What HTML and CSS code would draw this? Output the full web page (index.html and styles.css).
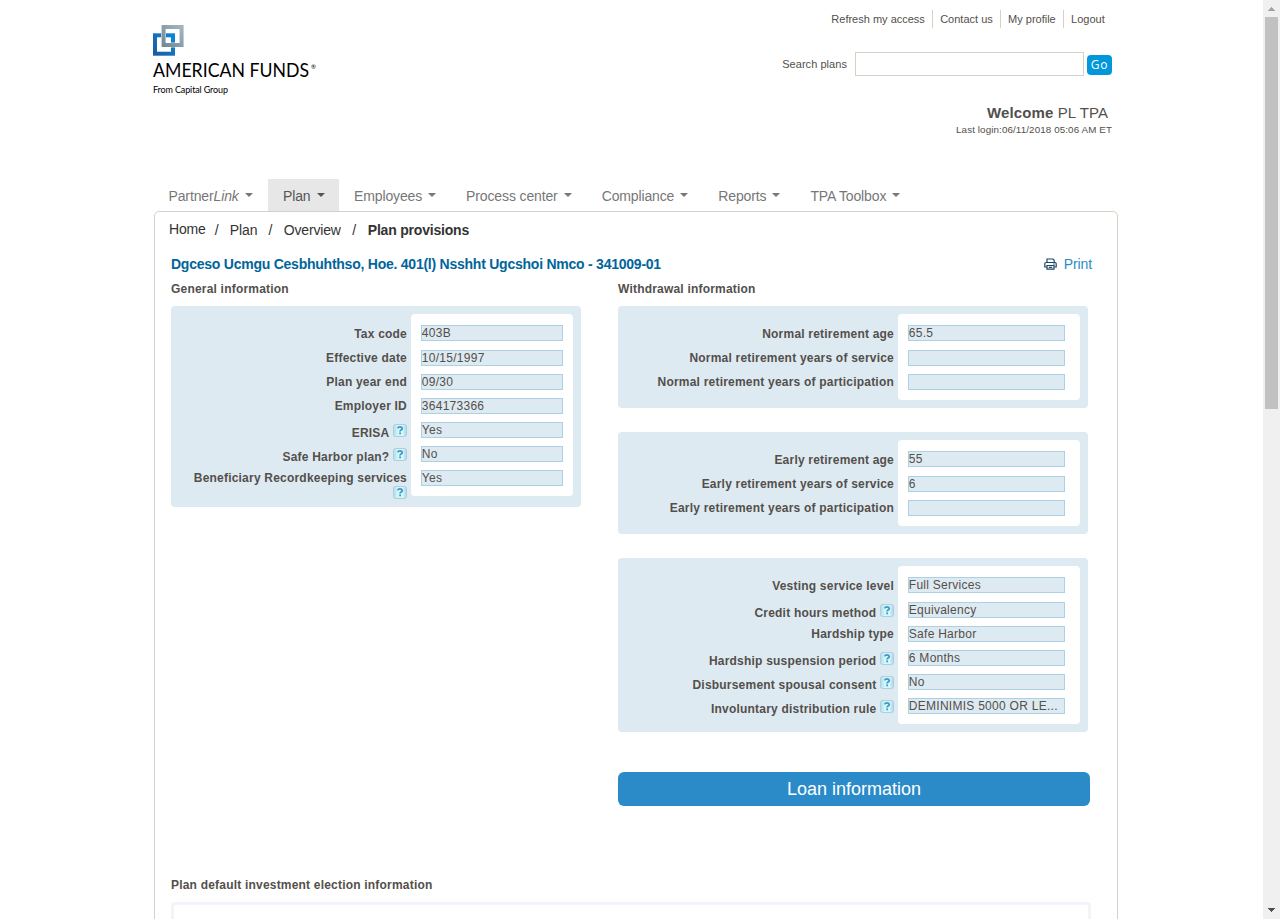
FILE: index.html
```html
<!DOCTYPE html>
<html lang="en">
<head>
<meta charset="utf-8">
<title>Plan provisions</title>
<link rel="stylesheet" href="styles.css">
</head>
<body>
<svg width="0" height="0" class="defs">
  <defs>
    <linearGradient id="helpBg" x1="0" y1="0" x2="1" y2="0"><stop offset="0" stop-color="#b0dcea"/><stop offset=".35" stop-color="#d2f8fb"/><stop offset=".7" stop-color="#d2f8fb"/><stop offset="1" stop-color="#a9d5e6"/></linearGradient>
    <symbol id="help" viewBox="0 0 14 13"><rect x=".5" y=".5" width="13" height="12" rx="2" fill="url(#helpBg)" stroke="#b4ccd8"/><path d="M4.8 4.3Q5 2.9 7 2.9T9.2 4.4Q9.2 5.4 8 6Q7.1 6.5 7.1 7.5M7.1 8.6V10.2" fill="none" stroke="#4295c8" stroke-width="1.8"/></symbol>
  </defs>
</svg>
<div class="page">
  <header class="header">
    <svg class="logo" width="170" height="76" viewBox="0 0 170 76">
      <defs>
        <linearGradient id="blue" x1="0" y1="1" x2="1" y2="0"><stop offset="0" stop-color="#1c5ba5"/><stop offset="1" stop-color="#0e86d4"/></linearGradient>
        <linearGradient id="grey" x1="0" y1="1" x2="1" y2="0"><stop offset="0" stop-color="#738a97"/><stop offset="1" stop-color="#a3b5bf"/></linearGradient>
      </defs>
      <rect x="2" y="10.3" width="18" height="18.4" fill="none" stroke="url(#blue)" stroke-width="4"/>
      <rect x="10.6" y="2" width="18" height="18" fill="none" stroke="#fff" stroke-width="4.8"/>
      <rect x="10.6" y="2" width="18" height="18" fill="none" stroke="url(#grey)" stroke-width="4"/>
      <text class="logo-name" x="0" y="51.5" textLength="156" lengthAdjust="spacingAndGlyphs">AMERICAN FUNDS</text>
      <text class="logo-reg" x="158" y="44">®</text>
      <text class="logo-sub" x="0" y="68" textLength="75">From Capital Group</text>
    </svg>
    <div class="tools">
      <nav class="links"><a>Refresh my access</a><a>Contact us</a><a>My profile</a><a>Logout</a></nav>
      <div class="search"><label>Search plans</label><div class="search-box"></div><div class="go">Go</div></div>
      <div class="welcome"><b>Welcome</b> PL TPA</div>
      <div class="login">Last login:06/11/2018 05:06 AM ET</div>
    </div>
  </header>
  <nav class="tabs">
    <a class="partner"><span>Partner<i>Link</i></span></a><a class="active">Plan</a><a>Employees</a><a>Process center</a><a>Compliance</a><a>Reports</a><a>TPA Toolbox</a>
  </nav>
  <main class="content">
    <div class="crumbs"><a class="home">Home</a><span>/</span><a>Plan</a><span>/</span><a>Overview</a><span>/</span><b>Plan provisions</b></div>
    <div class="title"><h1>Dgceso Ucmgu Cesbhuhthso, Hoe. 401(l) Nsshht Ugcshoi Nmco - 341009-01</h1>
      <a class="print"><svg width="13" height="12" viewBox="0 0 13 12" fill="none" stroke="#1d4868"><path d="M3 4.5V1H9L10.2 2.2V4.5M3 9H.8V5.8Q.8 4.5 2 4.5H11Q12.2 4.5 12.2 5.8V9H10M3 7.5H10V11.2H3ZM4.8 9.4H8.2M9.2 6H10.8" stroke-width="1.2"/></svg>Print</a>
    </div>
    <div class="columns">
      <section class="left">
        <h2>General information</h2>
        <div class="panel general">
          <div class="labels">
            <div>Tax code</div><div>Effective date</div><div>Plan year end</div><div>Employer ID</div>
            <div class="q"><span>ERISA</span><svg><use href="#help"/></svg></div>
            <div class="q"><span>Safe Harbor plan?</span><svg><use href="#help"/></svg></div>
            <div class="wrap"><span>Beneficiary Recordkeeping services</span><svg><use href="#help"/></svg></div>
          </div>
          <div class="values"><p>403B</p><p>10/15/1997</p><p>09/30</p><p>364173366</p><p>Yes</p><p>No</p><p>Yes</p></div>
        </div>
      </section>
      <section class="right">
        <h2>Withdrawal information</h2>
        <div class="panel">
          <div class="labels"><div>Normal retirement age</div><div>Normal retirement years of service</div><div>Normal retirement years of participation</div></div>
          <div class="values"><p>65.5</p><p></p><p></p></div>
        </div>
        <div class="panel">
          <div class="labels"><div>Early retirement age</div><div>Early retirement years of service</div><div>Early retirement years of participation</div></div>
          <div class="values"><p>55</p><p>6</p><p></p></div>
        </div>
        <div class="panel">
          <div class="labels">
            <div>Vesting service level</div>
            <div class="q"><span>Credit hours method</span><svg><use href="#help"/></svg></div>
            <div>Hardship type</div>
            <div class="q"><span>Hardship suspension period</span><svg><use href="#help"/></svg></div>
            <div class="q"><span>Disbursement spousal consent</span><svg><use href="#help"/></svg></div>
            <div class="q"><span>Involuntary distribution rule</span><svg><use href="#help"/></svg></div>
          </div>
          <div class="values"><p>Full Services</p><p>Equivalency</p><p>Safe Harbor</p><p>6 Months</p><p>No</p><p>DEMINIMIS 5000 OR LE...</p></div>
        </div>
        <div class="loan">Loan information</div>
      </section>
    </div>
    <h2 class="election">Plan default investment election information</h2>
    <div class="election-box"></div>
  </main>
</div>
<aside class="scrollbar">
  <svg width="17" height="17" shape-rendering="crispEdges"><path d="M5 11H12V10H11V9H10V8H9V7H8V8H7V9H6V10H5Z" fill="#a3a3a3"/></svg>
  <div class="thumb"></div>
  <svg width="17" height="17" shape-rendering="crispEdges"><path d="M5 6H12V7H11V8H10V9H9V10H8V9H7V8H6V7H5Z" fill="#505050"/></svg>
</aside>
</body>
</html>
```
FILE: styles.css
```css
* { box-sizing: border-box; }
body { margin: 0; height: 919px; overflow: hidden; display: flex; background: #fff; color: #534f4b; font: 12px "Liberation Sans", Arial, sans-serif; }
.defs { position: absolute; }
.page { width: 1263px; padding: 0 145px 0 153px; height: 919px; overflow: hidden; }
.scrollbar { width: 17px; height: 919px; background: #f0f0f0; display: flex; flex-direction: column; }
.scrollbar svg { display: block; flex: none; }
.scrollbar svg:last-child { margin-top: auto; }
.thumb { width: 13px; height: 392px; margin-left: 2px; background: #c1c1c1; }

.header { height: 179px; display: flex; justify-content: space-between; padding-right: 6px; }
.logo { margin-top: 25px; overflow: visible; }
.logo text { font-family: Lato, sans-serif; fill: #000; }
.logo .logo-name { font-size: 18.5px; }
.logo .logo-reg { font-size: 6px; }
.logo .logo-sub { font-size: 9px; }
.tools { display: flex; flex-direction: column; align-items: flex-end; }
.links { display: flex; margin-top: 10px; height: 18px; line-height: 18px; font-size: 11px; }
.links a { padding: 0 7.3px 0 7px; border-left: 1px solid #d3d2c7; }
.links a:first-child { border: 0; }
.search { display: flex; align-items: center; height: 24px; margin-top: 24px; font-size: 11px; letter-spacing: .05px; }
.search-box { width: 229px; height: 24px; border: 1px solid #d3d2c7; margin: 0 3px 0 8px; }
.go { width: 25px; height: 20px; margin-top: 2px; border-radius: 4px; background: #0098db; color: #fff; font: 500 12px/20px "Open Sans", sans-serif; letter-spacing: .8px; text-align: center; }
.welcome { margin: 27px 4px 0 0; font-size: 15px; line-height: 20px; letter-spacing: .1px; }
.login { font-size: 9.8px; line-height: 13px; letter-spacing: .11px; }

.tabs { display: flex; height: 32px; }
.tabs a { display: flex; align-items: center; padding: 2px 15px 0; font-size: 14px; letter-spacing: -.13px; color: #777; }
.tabs a::after { content: ""; border: 4px solid transparent; border-top-color: currentColor; border-bottom: 0; margin: -3px 0 0 6px; }
.tabs .partner { width: 115px; padding-left: 15.5px; padding-right: 0; }
.tabs .active { width: 71px; padding-right: 0; background: #e7e7e7; color: #555; }

.content { margin: 0 0 0 1px; width: 964px; height: 730px; border: 1px solid #d3d2c7; border-radius: 5px 5px 0 0; padding: 0 27px 0 16px; }
.crumbs { display: flex; height: 36px; margin-left: -2px; line-height: 36px; font-size: 14px; letter-spacing: -.15px; color: #333; }
.crumbs span { width: 26.4px; text-align: center; }
.home { line-height: 34px; margin-right: -2.3px; }
.crumbs b { letter-spacing: -.2px; margin-left: .6px; }
.title { display: flex; justify-content: space-between; height: 32px; line-height: 32px; margin-right: -2px; }
h1 { margin: 0; font-size: 14px; letter-spacing: -.24px; color: #00659b; white-space: nowrap; }
.print { display: flex; align-items: center; gap: 7px; font-size: 14px; letter-spacing: -.1px; color: #2a8bc8; }
h2 { margin: 0; height: 26px; line-height: 18px; font-size: 12px; letter-spacing: .2px; }
.columns { display: flex; gap: 37px; height: 596px; }
.left { width: 410px; }
.right { width: 470px; }
.panel { display: flex; align-items: flex-start; background: #deeaf2; border-radius: 4px; padding: 8px; margin-bottom: 24px; }
.general { height: 201px; }
.labels { flex: 1; padding: 8px 4px 0 0; font-weight: bold; letter-spacing: .21px; white-space: nowrap; }
.labels div { height: 24px; line-height: 24px; display: flex; justify-content: flex-end; }
.labels svg { width: 14px; height: 13px; margin: 6px 0 0 3.6px; }
.labels .q span { padding-top: 3px; }
.labels .wrap { flex-direction: column; align-items: flex-end; justify-content: flex-start; }
.labels .wrap svg { margin: -4px 0 0; flex: none; }
.values { width: 182px; padding: 11px 15px 10px 10px; background: #fff; border-radius: 4px; }
.general .values { width: 162px; padding-right: 10px; }
.values p { margin: 0 0 8px; height: 16px; line-height: 14px; border: 1px solid #acd0e4; background: #deeaf2; text-indent: -.2px; letter-spacing: .27px; overflow: hidden; white-space: nowrap; }
.values p:first-child { margin-bottom: 9px; }
.values p:last-child { margin-bottom: 0; }
.loan { width: 472px; height: 34px; line-height: 34px; margin-top: 40px; border-radius: 6px; background: #2b8bc8; color: #fff; text-align: center; font-size: 18px; }
.election-box { width: 920px; height: 60px; border: 3px solid #f1f5f9; border-radius: 4px; }
```
